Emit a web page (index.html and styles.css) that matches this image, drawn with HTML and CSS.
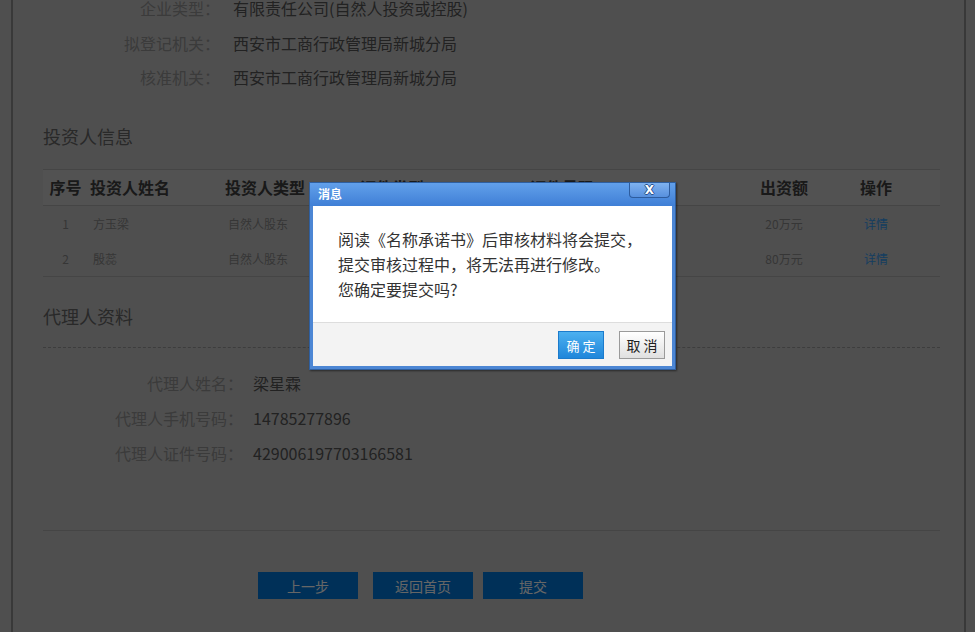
FILE: index.html
```html
<!doctype html>
<html lang="zh-CN">
<head>
    <meta charset="UTF-8">
    <meta name="viewport" content="width=device-width, initial-scale=1.0">
    <title>名称预先核准 - 确认提交</title>
    <link rel="stylesheet" href="styles.css">
</head>
<body>
<div class="main">
    <div class="info">
        <div class="info-row"><span class="info-label">企业类型：</span><span class="info-value">有限责任公司(自然人投资或控股)</span></div>
        <div class="info-row"><span class="info-label">拟登记机关：</span><span class="info-value">西安市工商行政管理局新城分局</span></div>
        <div class="info-row"><span class="info-label">核准机关：</span><span class="info-value">西安市工商行政管理局新城分局</span></div>
    </div>

    <div class="section-title">投资人信息</div>
    <div class="table">
        <div class="tr th">
            <div class="td c">序号</div>
            <div class="td">投资人姓名</div>
            <div class="td">投资人类型</div>
            <div class="td pad">证件类型</div>
            <div class="td">证件号码</div>
            <div class="td c">出资额</div>
            <div class="td c">操作</div>
            <div class="td"></div>
        </div>
        <div class="tr">
            <div class="td c">1</div>
            <div class="td">方玉梁</div>
            <div class="td">自然人股东</div>
            <div class="td pad"></div>
            <div class="td"></div>
            <div class="td c">20万元</div>
            <div class="td c"><a class="link" href="#">详情</a></div>
            <div class="td"></div>
        </div>
        <div class="tr">
            <div class="td c">2</div>
            <div class="td">殷蕊</div>
            <div class="td">自然人股东</div>
            <div class="td pad"></div>
            <div class="td"></div>
            <div class="td c">80万元</div>
            <div class="td c"><a class="link" href="#">详情</a></div>
            <div class="td"></div>
        </div>
    </div>

    <div class="section-title agent-title">代理人资料</div>
    <div class="agent">
        <div class="agent-row"><span class="agent-label">代理人姓名：</span><span class="info-value">梁星霖</span></div>
        <div class="agent-row"><span class="agent-label">代理人手机号码：</span><span class="info-value">14785277896</span></div>
        <div class="agent-row"><span class="agent-label">代理人证件号码：</span><span class="info-value">429006197703166581</span></div>
    </div>

    <div class="actions">
        <button type="button" class="btn btn-prev">上一步</button>
        <button type="button" class="btn">返回首页</button>
        <button type="button" class="btn">提交</button>
    </div>
</div>

<div class="mask"></div>

<div class="dialog">
    <div class="dialog-head">
        <span class="dialog-title">消息</span>
        <span class="dialog-close">X</span>
    </div>
    <div class="dialog-body">
        阅读《名称承诺书》后审核材料将会提交，<br>
        提交审核过程中，将无法再进行修改。<br>
        您确定要提交吗?
    </div>
    <div class="dialog-foot">
        <button type="button" class="d-btn d-ok">确定</button>
        <button type="button" class="d-btn d-cancel">取消</button>
    </div>
</div>
</body>
</html>
```

FILE: styles.css
```css
body{
    margin: 0;
    padding: 0;
    background-color: #c6c6c6;
    font-family: "Noto Sans CJK SC", "Liberation Sans", sans-serif;
    overflow: hidden;
}
.main
{
    margin: -9px 0 0 11px;
    width: 955px;
    height: 641px;
    padding: 0 24px 0 30px;
    box-sizing: border-box;
    border-left: 2px solid #909090;
    border-right: 2px solid #909090;
}
.info-row, .agent-row
{
    display: flex;
    height: 35px;
    line-height: 35px;
    font-size: 16px;
}
.info-row:nth-child(2){ height: 34px; line-height: 34px; }
.info-label
{
    width: 177px;
    text-align: right;
    color: #939393;
    margin-right: 13px;
}
.info-value
{
    color: #555555;
}
.section-title
{
    font-size: 18px;
    line-height: 24px;
    color: #666666;
    margin-top: 29px;
}
.table
{
    margin-top: 21px;
    border-top: 1px solid #adadad;
    border-bottom: 1px solid #adadad;
}
.tr
{
    display: grid;
    grid-template-columns: 45px 135px 105px 200px 210px 92px 92px 1fr;
    height: 35px;
    line-height: 35px;
    font-size: 12px;
    color: #888888;
}
.th
{
    height: 35px;
    background-color: #cdcdcd;
    border-bottom: 1px solid #adadad;
    font-size: 16px;
    font-weight: bold;
    color: #404040;
}
.td
{
    padding-left: 5px;
    white-space: nowrap;
    overflow: hidden;
}
.th .td
{
    padding-left: 2px;
}
.td.c, .th .td.c
{
    text-align: center;
    padding-left: 0;
}
.td.pad, .th .td.pad
{
    padding-left: 32px;
}
.link
{
    color: #3399ee;
    text-decoration: none;
}
.agent-title
{
    margin-top: 27px;
    padding-bottom: 19px;
    border-bottom: 1px dashed #999999;
}
.agent
{
    margin-top: 18px;
    padding-bottom: 59px;
    border-bottom: 1px solid #adadad;
}
.agent-label
{
    width: 200px;
    text-align: right;
    color: #939393;
    margin-right: 10px;
}
.actions
{
    display: flex;
    gap: 10px;
    padding: 41px 0 0 215px;
}
.btn
{
    width: 100px;
    height: 27px;
    border: none;
    background-color: #0078dc;
    color: #ffffff;
    font-size: 14px;
    font-family: "Noto Sans CJK SC", sans-serif;
    padding: 0;
}
.btn-prev
{
    margin-right: 5px;
}
.mask
{
    position: fixed;
    top: 0;
    left: 0;
    right: 0;
    bottom: 0;
    background-color: rgba(0, 0, 0, 0.6);
}
.dialog
{
    position: fixed;
    left: 309px;
    top: 182px;
    width: 367px;
    box-sizing: border-box;
    border: 1px solid #2f5f9f;
    background-color: #4c86d4;
    padding: 0 3px 3px;
    box-shadow: 1px 1px 2px rgba(0, 0, 0, 0.5);
}
.dialog-head
{
    display: flex;
    justify-content: space-between;
    height: 23px;
    background: linear-gradient(#62a0ea, #3f7fd6);
    margin: 0 -3px;
    padding: 0 5px 0 8px;
}
.dialog-title
{
    color: #ffffff;
    font-size: 12px;
    font-weight: bold;
    line-height: 21px;
}
.dialog-close
{
    width: 39px;
    height: 14px;
    border: 1px solid #2d5c9e;
    border-top: none;
    border-radius: 0 0 4px 4px;
    background: linear-gradient(#7fb2ef, #5790de);
    color: #ffffff;
    font-family: "DejaVu Sans", sans-serif;
    font-size: 12px;
    font-weight: bold;
    line-height: 15px;
    text-align: center;
    text-shadow: 1px 0 0 #27518d, -1px 0 0 #27518d, 0 1px 0 #27518d, 0 -1px 0 #27518d;
}
.dialog-body
{
    background-color: #ffffff;
    padding: 21px 20px 20px 25px;
    font-size: 16px;
    line-height: 25px;
    color: #333333;
}
.dialog-foot
{
    display: flex;
    justify-content: flex-end;
    gap: 15px;
    background-color: #f3f3f3;
    border-top: 1px solid #dddddd;
    padding: 8px 7px 7px;
}
.d-btn
{
    width: 46px;
    height: 28px;
    padding: 0;
    font-size: 13px;
    font-family: "Noto Sans CJK SC", sans-serif;
    letter-spacing: 3px;
    text-indent: 3px;
}
.d-ok
{
    border: 1px solid #1b7bcc;
    background: linear-gradient(#4cb0f0, #1f86da);
    color: #ffffff;
}
.d-cancel
{
    border: 1px solid #9a9a9a;
    background: linear-gradient(#ffffff, #e0e0e0);
    color: #222222;
    font-size: 14px;
}
```
